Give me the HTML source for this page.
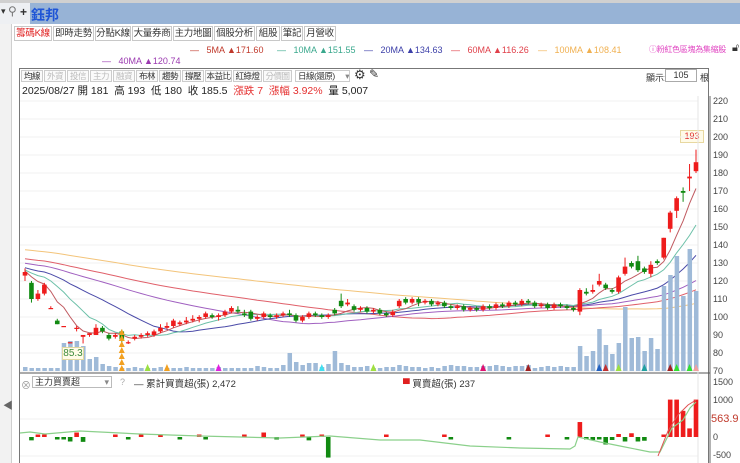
<!DOCTYPE html>
<html><head><meta charset="utf-8">
<style>
*{margin:0;padding:0;box-sizing:border-box}
body{width:740px;height:463px;overflow:hidden;background:#fff;font-family:"Liberation Sans","Noto Sans CJK TC",sans-serif;position:relative;font-size:11px;color:#333}
.abs{position:absolute;white-space:nowrap}
#top{left:0;top:0;width:740px;height:3px;background:#d0d0d0}
#bar{left:0;top:3px;width:740px;height:21px;background:#97b3d6}
#tool{left:0;top:3px;width:30px;height:21px;background:#eef0f3}
.tab{position:absolute;top:26px;height:15px;border:1px solid #c8c8c8;background:#fff;font-size:9.5px;line-height:13px;text-align:center;color:#333;white-space:nowrap;overflow:hidden;letter-spacing:-0.3px}
.tb{position:absolute;top:70px;height:12px;border:1px solid #ccc;font-size:8.5px;line-height:10px;text-align:center;color:#333;background:#fafafa;white-space:nowrap;overflow:hidden;letter-spacing:-0.5px}
.tb.g{color:#bbb}
.ax{position:absolute;left:713px;font-size:9px;color:#444}
</style></head><body>
<div class="abs" id="top"></div>
<div class="abs" id="bar"></div>
<div class="abs" id="tool"><span style="position:absolute;left:1px;top:3px;font-size:9px">▾</span><span style="position:absolute;left:8px;top:1px;font-size:12px;color:#777">⚲</span><span style="position:absolute;left:20px;top:2px;font-size:12px;font-weight:bold">+</span></div>
<div class="abs" style="left:31px;top:5px;font-size:14px;font-weight:bold;color:#1f55d6">鈺邦</div>
<div class="abs" style="left:11px;top:24px;width:1px;height:439px;background:#cfcfcf"></div>
<div class="abs" style="left:0;top:24px;width:11px;height:439px;background:#f2f2f2"></div>
<div class="abs" style="left:3px;top:397px;font-size:10px;color:#666">◀</div>

<div class="tab" style="left:14px;width:38px;color:#e02020">籌碼K線</div>
<div class="tab" style="left:53px;width:41px">即時走勢</div>
<div class="tab" style="left:95px;width:36px">分點K線</div>
<div class="tab" style="left:132px;width:40px">大量券商</div>
<div class="tab" style="left:173px;width:40px">主力地圖</div>
<div class="tab" style="left:214px;width:41px">個股分析</div>
<div class="tab" style="left:256px;width:24px">組股</div>
<div class="tab" style="left:281px;width:22px">筆記</div>
<div class="tab" style="left:304px;width:32px">月營收</div>

<div class="abs" style="left:190px;top:45px;font-size:9px;color:#c0392b">—&nbsp;&nbsp;&nbsp;5MA ▲171.60</div>
<div class="abs" style="left:277px;top:45px;font-size:9px;color:#3aa88d">—&nbsp;&nbsp;&nbsp;10MA ▲151.55</div>
<div class="abs" style="left:364px;top:45px;font-size:9px;color:#3b3ea8">—&nbsp;&nbsp;&nbsp;20MA ▲134.63</div>
<div class="abs" style="left:451px;top:45px;font-size:9px;color:#e0404a">—&nbsp;&nbsp;&nbsp;60MA ▲116.26</div>
<div class="abs" style="left:538px;top:45px;font-size:9px;color:#f0b050">—&nbsp;&nbsp;&nbsp;100MA ▲108.41</div>
<div class="abs" style="left:102px;top:56px;font-size:9px;color:#9b3ab0">—&nbsp;&nbsp;&nbsp;40MA ▲120.74</div>
<div class="abs" style="left:649px;top:44px;font-size:8px;color:#e040c0;letter-spacing:-0.3px">ⓘ粉紅色區塊為集縮股</div>
<div class="abs" style="left:732px;top:42px;font-size:11px">🔓︎</div>

<div class="abs" style="left:19px;top:68px;width:690px;height:395px;border:1px solid #777;border-bottom:none"></div>
<div class="tb" style="left:21px;width:22px">均線</div>
<div class="tb g" style="left:44px;width:22px">外資</div>
<div class="tb g" style="left:67px;width:22px">投信</div>
<div class="tb g" style="left:90px;width:22px">主力</div>
<div class="tb g" style="left:113px;width:22px">融資</div>
<div class="tb" style="left:136px;width:22px">布林</div>
<div class="tb" style="left:159px;width:22px">趨勢</div>
<div class="tb" style="left:182px;width:22px">撐壓</div>
<div class="tb" style="left:205px;width:27px">本益比</div>
<div class="tb" style="left:233px;width:29px">紅綠燈</div>
<div class="tb g" style="left:263px;width:29px">分價圖</div>
<div class="tb" style="left:295px;width:55px;text-align:left;padding-left:2px;background:#fff">日線(還原) <span style="float:right;color:#888">▾</span></div>
<div class="abs" style="left:354px;top:67px;font-size:13px">⚙</div>
<div class="abs" style="left:369px;top:67px;font-size:12px">✎</div>
<div class="abs" style="left:646px;top:71px;font-size:9px">顯示:</div>
<div class="abs" style="left:665px;top:69px;width:32px;height:13px;border:1px solid #aaa;font-size:9px;text-align:center;line-height:11px">105</div>
<div class="abs" style="left:700px;top:71px;font-size:9px">根</div>
<div class="abs" style="left:22px;top:83px;font-size:10.5px;color:#222">2025/08/27 開 181 &nbsp;高 193 &nbsp;低 180 &nbsp;收 185.5 &nbsp;<span style="color:#e53030">漲跌 7 &nbsp;漲幅 3.92%</span> &nbsp;量 5,007</div>

<div class="ax" style="top:96px">220</div><div class="ax" style="top:114px">210</div><div class="ax" style="top:132px">200</div>
<div class="ax" style="top:150px">190</div><div class="ax" style="top:168px">180</div><div class="ax" style="top:186px">170</div>
<div class="ax" style="top:204px">160</div><div class="ax" style="top:222px">150</div><div class="ax" style="top:240px">140</div>
<div class="ax" style="top:258px">130</div><div class="ax" style="top:276px">120</div><div class="ax" style="top:294px">110</div>
<div class="ax" style="top:312px">100</div><div class="ax" style="top:330px">90</div><div class="ax" style="top:348px">80</div>
<div class="ax" style="top:366px">70</div>
<div class="ax" style="top:377px">1500</div><div class="ax" style="top:395px">1000</div>
<div class="ax" style="top:413px;color:#c0392b;font-size:11px;left:711px">563.9</div>
<div class="ax" style="top:432px">0</div><div class="ax" style="top:450px">-500</div>

<div class="abs" style="left:680px;top:130px;width:24px;height:13px;border:1px solid #e8d8a0;background:#fffbe8;color:#e03030;font-size:9px;text-align:center;line-height:11px">193</div>

<div class="abs" style="left:21px;top:377px;font-size:10px;color:#999">⊗</div>
<div class="abs" style="left:32px;top:376px;width:80px;height:12px;border:1px solid #bbb;font-size:9px;line-height:10px;padding-left:2px">主力買賣超<span style="float:right;color:#888;padding-right:2px">▾</span></div>
<div class="abs" style="left:120px;top:377px;font-size:9px;color:#aaa">?</div>
<div class="abs" style="left:134px;top:376px;font-size:9.5px">— 累計買賣超(張) 2,472</div>
<div class="abs" style="left:403px;top:376px;font-size:9.5px"><span style="color:#e02020">▀</span> 買賣超(張) 237</div>

<svg id="cv" class="abs" style="left:0;top:0" width="740" height="463"></svg>
<div class="abs" style="left:62px;top:347px;width:22px;height:13px;border:1px solid #e0d8a0;background:#fffbe8;color:#3a8a3a;font-size:10px;text-align:center;line-height:11px">85.3</div>
<script>
var s='';
function L(x1,y1,x2,y2,c,w){s+='<line x1="'+x1+'" y1="'+y1+'" x2="'+x2+'" y2="'+y2+'" stroke="'+c+'" stroke-width="'+(w||1)+'"/>';}
function R(x,y,w,h,c){s+='<rect x="'+x+'" y="'+y+'" width="'+w+'" height="'+Math.max(h,1)+'" fill="'+c+'"/>';}
function py(p){return 101+(220-p)*1.8;}
for(var p=70;p<=220;p+=10){L(20,py(p),698,py(p),'#f2f2f2');}
L(710,96,710,463,'#666');L(20,373,710,373,'#555');
L(20,419,698,419,'#f0f0f0');L(20,456,698,456,'#f0f0f0');
L(698,96,698,463,'#e6e6e6');
var d=[[123,125,127,120],[119,110,120,108],[110,113,115,109],[113,118,119,112],[105,105,106,105],[98,96,99,96],[95,95,95,95],[86,86,86,86],[94,94,95,92],[89,90,90,85.3],[90,91,91,89],[90,94,96,90],[94,92,95,91],[90,88,91,87],[89,90,91,88],[92,87,93,86],[86,86,87,85],[88,89,90,87],[89,90,91,88],[90,91,92,89],[90,92,93,89],[92,94,96,91],[94,95,97,93],[95,98,99,94],[96,97,98,95],[97,98,100,96],[98,99,101,97],[99,100,101,97],[100,102,103,99],[101,100,102,99],[100,101,102,98],[101,103,104,100],[103,105,106,102],[104,103,106,102],[102,101,104,100],[103,99,104,98],[99,100,101,98],[100,102,103,99],[101,100,102,99],[100,101,102,99],[101,102,103,100],[102,101,104,100],[101,98,102,97],[98,100,101,97],[100,102,103,99],[102,101,103,100],[101,100,102,99],[100,101,102,99],[104,102,105,101],[109,106,113,105],[107,108,110,106],[106,104,107,103],[104,105,106,103],[105,103,106,102],[103,104,105,102],[104,102,105,101],[102,101,103,100],[101,103,104,100],[106,109,110,105],[110,108,111,107],[108,110,111,107],[110,108,111,106],[108,109,110,107],[109,107,110,106],[107,108,109,106],[108,106,109,105],[106,105,107,104],[105,106,107,104],[106,104,107,103],[104,105,106,103],[105,104,106,103],[104,106,107,103],[106,105,107,104],[105,107,108,104],[107,106,108,105],[106,108,109,105],[108,107,109,106],[107,109,110,106],[109,108,110,107],[108,106,109,105],[106,107,108,105],[107,105,108,104],[105,107,108,104],[107,106,108,105],[106,105,107,104],[105,104,106,103],[103,115,116,101],[114,113,116,112],[114,115,118,113],[118,120,124,117],[118,116,119,115],[115,114,116,113],[114,122,123,113],[124,128,133,123],[130,128,131,127],[131,126,134,125],[127,125,128,124],[124,129,131,122],[131,130,132,129],[133,144,144,132],[149,158,159,147],[159,166,167,155],[170,169,172,164],[177,178,185,170],[181,186,193,180]];
var n=d.length,X=function(i){return 25+(i)*(671/(n-1));};
var hist=[];for(var k=0;k<100;k++)hist.push(150-k*0.25);
var cl=hist.concat(d.map(function(a){return a[1];}));
function ma(per,col){var pts=[];for(var i=0;i<n;i++){var j=100+i,sm=0;for(var q=0;q<per;q++)sm+=cl[j-q];pts.push(X(i).toFixed(1)+','+py(sm/per).toFixed(1));}s+='<polyline fill="none" stroke="'+col+'" stroke-width="1" points="'+pts.join(' ')+'"/>';}
ma(100,'#f3c47a');ma(60,'#e0606a');ma(40,'#a060c0');ma(20,'#4a4aa8');ma(10,'#6cc0a8');ma(5,'#c05a60');
var vol=[4,3,3,3,3,3,28,30,30,25,12,14,7,5,4,3,3,4,3,3,3,4,3,3,3,4,3,3,3,3,4,3,3,3,3,3,5,4,3,3,6,18,9,6,8,8,4,7,20,8,6,4,4,5,3,3,4,4,6,5,4,4,3,4,3,5,6,5,5,4,4,5,5,6,5,4,5,5,6,3,4,5,4,5,4,4,25,15,20,42,26,17,28,64,33,34,20,33,22,85,96,115,75,122,80];
for(var i=0;i<n;i++){R(X(i)-2,371-vol[i],4.5,vol[i],'#9fbad8');}
for(var i=0;i<n;i++){var a=d[i],x=X(i),up=a[1]>=a[0],c=up?'#ee1c1c':'#118a11';L(x,py(a[2]),x,py(a[3]),c);var t=py(Math.max(a[0],a[1])),h=Math.abs(a[1]-a[0])*1.8;R(x-2.3,t,4.6,Math.max(h,1.2),c);}
for(var k=0;k<7;k++)s+='<polygon points="'+(X(15)-3)+','+(371-k*6)+' '+(X(15)+3)+','+(371-k*6)+' '+X(15)+','+(365-k*6)+'" fill="#f2a020"/>';
var tri=[[19,'#9be040'],[22,'#f2a020'],[30,'#e020e0'],[54,'#a0e040'],[71,'#e01070'],[46,'#40e0f0'],[78,'#a02020'],[89,'#2060c0'],[92,'#9be040'],[90,'#c03030'],[96,'#20a0a0'],[100,'#a02020'],[101,'#30e030'],[103,'#30e030'],[104,'#f0a0a0']];
tri.forEach(function(t){var x=X(t[0]);s+='<polygon points="'+(x-3)+',371 '+(x+3)+',371 '+x+',364" fill="'+t[1]+'"/>';});
var z=437,sc=18.7/500;
var bb=[0,-90,30,30,0,-35,-40,-120,120,-130,0,0,0,0,20,0,-15,0,30,0,0,20,0,0,-20,0,0,20,-40,0,0,0,0,0,30,0,0,120,0,-15,0,0,0,30,-90,0,60,-550,0,0,0,0,0,0,0,0,20,0,0,0,0,0,0,0,0,60,-30,0,0,0,0,0,0,0,0,-30,0,0,0,0,0,20,0,0,-40,0,400,-60,-80,-30,-200,-80,80,-120,100,-120,-100,0,0,40,1000,1000,700,230,1000,237];
for(var i=0;i<n;i++){var v=bb[i];if(v){var c=v>0?'#ee1c1c':'#118a11';var h=Math.abs(v)*sc;h=Math.max(h,2.5);R(X(i)-2.3,v>0?z-h:z,4.6,h,c);}}
var lp=[[20,433],[30,432],[45,434],[80,431],[140,434],[200,436],[280,438],[330,436],[380,440],[420,440],[470,446],[520,448],[570,449],[575,446],[578,437],[600,442],[620,446],[650,452],[660,452],[672,428],[683,420],[690,408],[696,402]];
s+='<polyline fill="none" stroke="#8bd08b" stroke-width="1.2" points="'+lp.map(function(p){return p.join(',')}).join(' ')+'"/>';
s+='<polyline fill="none" stroke="#e05050" stroke-width="1" points="658,456 668,431 678,415 688,405 696,400"/>';
document.getElementById('cv').innerHTML=s;
</script>
</body></html>
